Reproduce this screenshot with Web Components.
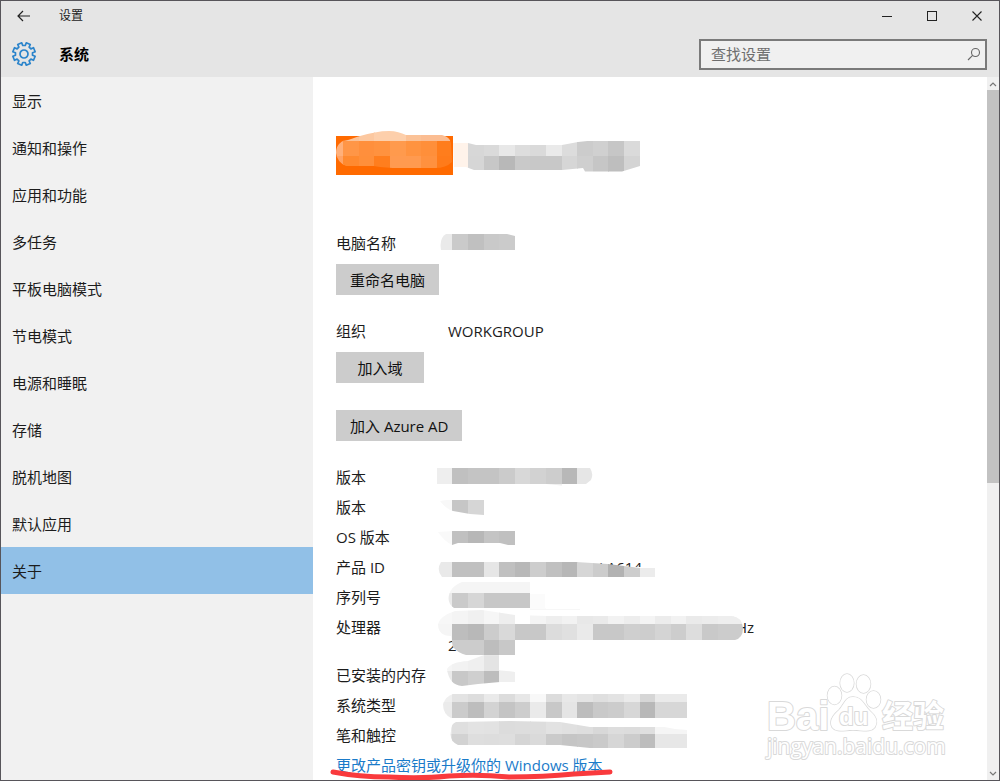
<!DOCTYPE html>
<html lang="zh-CN">
<head>
<meta charset="utf-8">
<title>设置</title>
<style>
  html, body { margin: 0; height: 100%; }
  body {
    font-family: "Open Sans", "Noto Sans CJK SC", sans-serif;
    font-size: 15px;
    line-height: 18px;
    color: #1c1c1c;
    background: #fff;
  }
</style>
</head>
<body>
<settings-app></settings-app>

<script>
const define = (name, html, setup) => {
  const template = document.createElement('template');
  template.innerHTML = html;
  customElements.define(name, class extends HTMLElement {
    connectedCallback() {
      if (this.shadowRoot) return;
      const root = this.attachShadow({ mode: 'open' });
      root.append(template.content.cloneNode(true));
      if (setup) setup(this, root);
    }
  });
};

/* Title bar: back arrow, window title, window controls */
define('title-bar', `
<style>
  :host { display: flex; align-items: center; height: 30px; font-size: 12px; }
  button { border: 0; padding: 0; background: none; color: #222; height: 30px; width: 45px; display: grid; place-items: center; }
  .title { flex: 1; padding-left: 13px; }
  svg { display: block; fill: none; stroke: currentColor; }
</style>
<button aria-label="返回"><svg width="14" height="12" viewBox="0 0 14 12" stroke-width="1.2"><path d="M13 6H1.2M6 1L1 6l5 5"/></svg></button>
<span class="title"><slot></slot></span>
<button aria-label="最小化"><svg width="10" height="10" shape-rendering="crispEdges"><path d="M0 5.5h10"/></svg></button>
<button aria-label="最大化"><svg width="10" height="10" shape-rendering="crispEdges"><path d="M.5 .5h9v9h-9z"/></svg></button>
<button aria-label="关闭"><svg width="10" height="10" stroke-width="1.1"><path d="M.5 .5l9 9M9.5 .5l-9 9"/></svg></button>
`);

define('gear-icon', `
<style>:host { display: block; } svg { display: block; }</style>
<svg width="26" height="26" viewBox="-13 -13 26 26" fill="none" stroke="#2b84cb" stroke-width="1.7" stroke-linejoin="round"><path/><circle r="4"/></svg>
`, (host, root) => {
  const pts = [];
  for (let i = 0; i < 8; i++) {
    const a = 22.5 + i * 45;
    for (const [d, r] of [[-14, 8.6], [-11, 11.4], [11, 11.4], [14, 8.6]]) {
      const t = (a + d) * Math.PI / 180;
      pts.push((r * Math.cos(t)).toFixed(2) + ' ' + (r * Math.sin(t)).toFixed(2));
    }
  }
  root.querySelector('path').setAttribute('d', 'M' + pts.join('L') + 'Z');
});

define('search-box', `
<style>
  :host { display: block; width: 288px; }
  label { display: flex; align-items: center; height: 31px; box-sizing: border-box; border: 2px solid #7a7a7a; background: #f0f0f0; padding: 0 4px 0 10px; }
  input { flex: 1; min-width: 0; border: 0; padding: 0; background: none; font: inherit; color: #222; outline: 0; }
  input::placeholder { color: #6e6e6e; opacity: 1; }
</style>
<label><input type="text" placeholder="查找设置" aria-label="查找设置">
<svg width="14" height="14" fill="none" stroke="#666" stroke-width="1.1"><circle cx="8.5" cy="5.5" r="4"/><path d="M5.6 8.4L1 13"/></svg></label>
`);

define('page-header', `
<style>
  :host { display: flex; align-items: center; height: 46px; padding: 0 12px 0 10px; }
  h1 { flex: 1; margin: 0 0 0 22px; font-size: 15px; line-height: 18px; color: #000; }
</style>
<gear-icon></gear-icon><h1><slot></slot></h1><search-box></search-box>
`);

define('nav-item', `
<style>
  :host { display: block; }
  a { display: flex; align-items: center; height: 47px; padding-left: 11px; color: inherit; text-decoration: none; }
  :host([selected]) a { background: #91c0e7; }
</style>
<a href="#"><slot></slot></a>
`, (host, root) => {
  if (host.hasAttribute('selected')) root.querySelector('a').setAttribute('aria-current', 'page');
});

define('action-button', `
<style>
  :host { display: block; }
  button { display: block; min-width: 88px; height: 31px; border: 0; padding: 0 14px; background: #ccc; color: #111; font: inherit; white-space: nowrap; }
</style>
<button><slot></slot></button>
`);

/* Blocks of a shared 15.6-unit mosaic grid, trimmed to a freehand outline */
const MASKS = {
  badge: { top: 136, left: 336, d: 'M336 153C336 147 339 143 343 141C350 140 356 137 360 136C370 133 380 131 389 131C396 131 401 133 406 135L442 135Q450 137 451 143L452 162Q446 168 435 168L400 168Q385 168 374 166L346 166Q337 162 336 153Z',
    rows: { '-22': [-7, 'fbbd92 fbc297 fcc8a0 fdcfab fdcfab fbc297 fbbd92 fbbd92'], '-21': [-7, 'ffb07a ff9647 ff8f3c ff923f ff9a4d ff9340 ff8f3a ff7d1c'], '-20': [-7, 'ffa366 ff8a30 ff8f3a ff7e1e ff9a50 ff9a50 ff913f ff7b1a'] } },
  title: { top: 136, left: 453, d: 'M453 143H468L476 145H562L578 142L592 140.5H640V166L622 171.5H585L583 168L562 170H474L466 167H454Z',
    rows: { '-21': [1, 'fff3ea d7 da e8 dd da ea dc cc d0 c6 da'], '-20': [1, 'fff3ea d6 c7 b8 c9 c8 c8 d6 cf c6 be d4'] } },
  name: { top: 234, d: 'M446 234H507L515 236V250H441Q439 238 446 234Z', rows: { '-15': [0, 'ea ca c0 c9 cb d8'] } },
  edition: { top: 468, d: 'M437 468H590Q594 474 591 480L586 484L566 486L546 484H437Z', rows: { 0: [0, 'ee c0 c4 c4 cb d8 d2 cd b8 e6'], 1: [5, 'eee eee eee'] } },
  version: { top: 498, d: 'M440 501L453 499H484V515L470 514L453 511Q446 509 440 501Z', rows: { 2: [0, 'f8 c6 d6'] } },
  os: { top: 528, d: 'M438 532L453 531H515V545H508L500 543H458L452 545Q444 541 438 532Z', rows: { 4: [0, 'f9 c0 b7 c4 c0'] } },
  product: { top: 558, d: 'M441 562H576L608 564L640 568L655 568V577H442Q436 570 441 562Z', rows: { 6: [0, 'e9 c0 c0 e6 c0 b8 cd c0 b7 d6 cc b2 cd ec'] } },
  serial: { top: 588, d: 'M462 582H530V594H545V608H454Q447 603 449 595Q451 586 462 582ZM530 608H580V610H530Z', rows: { 7: [0, 'f5 f5 f5 f5 f5 f5'], 8: [0, 'ea ca d6 c7 c7 c7 fb'], 9: [6, 'f7 f7 f7 f7'] } },
  cpu: { top: 618, d: 'M438 624Q440 616 455 611L482 610L515 615L548 616H732Q742 617 743 628Q743 638 735 640H515V655H466Q458 653 453 647L451 636Q438 636 438 624Z',
    rows: { 9: [0, 'f7 f4 f0 f6 ee ff f4 ee f2 e8 ea f2 ed f4 ec f2 ea ec ee ee ee'], 10: [0, 'f5 bd b8 cc d9 c8 c8 dc e0 ea c8 c8 cf cd d4 cd dd c9 cc cc'], 11: [0, 'ddd cc cc bd c8'] } },
  ram: { top: 666, d: 'M447 669Q451 662 468 661L484 655H499V670L515 672V682H500L478 684L462 686Q449 685 447 669Z', rows: { 11: [0, 'f5 f0 f0 e7'], 12: [0, 'f5 f2 ef e4 f4 f4'], 13: [0, 'ea c8 cf bd ef'], 14: [0, 'ea cc cc'] } },
  type: { top: 696, d: 'M453 694H687V718H451Q443 714 443 704Q446 696 453 694Z', rows: { 14: [0, 'ef e3 dd ea dc e7 f8 dc e8 e4 df e3 ea d6 ea ea'], 15: [0, 'eb cb bd d3 c4 cd ea c8 e5 bd c9 cc d7 b8 d7 d7'], 16: [0, 'eb'] } },
  pen: { top: 726, d: 'M456 722L510 721L560 722L590 727H664L675 729L687 730V748H590L560 745H458Q449 741 451 731Q451 724 456 722Z', rows: { 16: [0, 'e8 df e3 e2 dc dd dd e2 e0 de d8 dd dc df f5 f5'], 17: [0, 'dd d2 de dd de d5 da ca c5 c7 ca d6 cc bd e7 e7'] } }
};
const hex = c => '#' + (c.length === 2 ? c + c + c : c);

define('pixel-mask', `
<style>
  :host { display: block; position: absolute; inset: 0; pointer-events: none; }
  svg { display: block; overflow: visible; }
</style>
<svg width="24" height="18" aria-hidden="true"></svg>
`, (host, root) => {
  const m = MASKS[host.getAttribute('name')];
  const left = m.left || 448;
  let cells = '';
  for (const [n, [start, colors]] of Object.entries(m.rows)) {
    colors.split(' ').forEach((c, i) => {
      const x = 436.7 + 15.6 * (start + i), y = 468.3 + 15.6 * n;
      cells += `<rect x="${x.toFixed(1)}" y="${y.toFixed(1)}" width="16" height="16" fill="${hex(c)}" shape-rendering="crispEdges"/>`;
    });
  }
  const svg = root.querySelector('svg');
  svg.setAttribute('viewBox', `${left} ${m.top} 24 18`);
  svg.innerHTML = `<clipPath id="c"><path d="${m.d}"/></clipPath><g clip-path="url(#c)">${cells}</g>`;
});

define('account-banner', `
<style>
  :host { display: flex; height: 39px; }
  div { position: relative; width: 117px; }
  .tile { background: #ff6a00; }
</style>
<div class="tile"><pixel-mask name="badge"></pixel-mask></div>
<div><pixel-mask name="title"></pixel-mask></div>
`);

define('info-row', `
<style>
  :host { display: grid; grid-template-columns: 112px minmax(0, 1fr); }
  .value { position: relative; }
</style>
<span><slot name="label"></slot></span><span class="value"><slot></slot></span>
`, (host, root) => {
  const name = host.getAttribute('mask');
  if (name) {
    const mask = document.createElement('pixel-mask');
    mask.setAttribute('name', name);
    root.querySelector('.value').append(mask);
  }
});

define('marked-link', `
<style>
  :host { display: block; position: relative; width: max-content; }
  a { color: #1a7bc9; text-decoration: none; }
  svg { position: absolute; left: -7px; top: 11px; overflow: visible; pointer-events: none; }
</style>
<a href="#"><slot></slot></a>
<svg width="286" height="14" fill="none" stroke="#f93a3d" stroke-width="5" stroke-linecap="round" stroke-linejoin="round" aria-hidden="true"><path d="M4 5Q30 10 60 10Q92 12 120 9Q150 7 180 10Q215 10 245 7L281 5"/></svg>
`);

define('scroll-bar', `
<style>
  :host { display: flex; flex-direction: column; width: 12px; background: #f0f0f0; }
  button { display: grid; place-items: center; border: 0; padding: 0; height: 13px; background: none; }
  .track { flex: 1; }
  .thumb { height: 58%; background: #c2c2c2; }
  svg { fill: none; stroke: #777; stroke-width: 1.2; }
</style>
<button aria-label="向上滚动"><svg width="8" height="6"><path d="M1 5l3-3 3 3"/></svg></button>
<div class="track"><div class="thumb"></div></div>
<button aria-label="向下滚动"><svg width="8" height="6"><path d="M1 1l3 3 3-3"/></svg></button>
`);

define('site-watermark', `
<style>
  :host { display: block; position: absolute; right: 50px; bottom: 16px; pointer-events: none; }
  svg { display: block; overflow: visible; }
  text { font-family: "Liberation Sans", "Noto Sans CJK SC", sans-serif; font-weight: 700; }
  .url { font-family: "Open Sans", sans-serif; font-weight: 400; }
</style>
<svg width="184" height="94" viewBox="765 670 184 94" fill="#fff" stroke="#d9d9d9" stroke-width="2" stroke-linejoin="round" paint-order="stroke">
  <text x="767" y="730" font-size="40">Bai</text>
  <g stroke-width="1.5">
    <ellipse cx="834.5" cy="695.5" rx="7" ry="9"/>
    <ellipse cx="847" cy="683" rx="6.8" ry="9"/>
    <ellipse cx="863.5" cy="684" rx="7" ry="9"/>
    <ellipse cx="873.5" cy="699.5" rx="7" ry="8.5"/>
    <path d="M853 697C862 697 864 705 870 711C877 717 878 722 875 727C871 733 863 730 853 730C844 730 836 733 832 727C829 721 833 715 839 710C844 705 845 697 853 697Z"/>
  </g>
  <text x="839" y="725" font-size="24">du</text>
  <text x="882" y="727" font-size="31">经验</text>
  <text class="url" x="767" y="754" font-size="21">jingyan.baidu.com</text>
</svg>
`);

define('about-page', `
<style>
  :host { display: block; overflow-y: auto; scrollbar-width: none; padding: 59px 0 0 23px; }
  .group { display: grid; gap: 12px; margin-bottom: 27px; justify-items: start; }
  .group:last-child { margin-bottom: 0; }
  account-banner { margin-bottom: 59px; }
  info-row { justify-self: stretch; }
</style>
<account-banner></account-banner>
<div class="group">
  <info-row mask="name"><span slot="label">电脑名称</span></info-row>
  <action-button>重命名电脑</action-button>
</div>
<div class="group">
  <info-row><span slot="label">组织</span>WORKGROUP</info-row>
  <action-button>加入域</action-button>
</div>
<div class="group"><action-button>加入 Azure AD</action-button></div>
<div class="group">
  <info-row mask="edition"><span slot="label">版本</span></info-row>
  <info-row mask="version"><span slot="label">版本</span></info-row>
  <info-row mask="os"><span slot="label">OS 版本</span></info-row>
  <info-row mask="product"><span slot="label">产品 ID</span><product-tail></product-tail></info-row>
  <info-row mask="serial"><span slot="label">序列号</span></info-row>
  <info-row mask="cpu"><span slot="label">处理器</span><cpu-value></cpu-value></info-row>
  <info-row mask="ram"><span slot="label">已安装的内存</span></info-row>
  <info-row mask="type"><span slot="label">系统类型</span></info-row>
  <info-row mask="pen"><span slot="label">笔和触控</span></info-row>
  <marked-link>更改产品密钥或升级你的 Windows 版本</marked-link>
</div>
`);

/* Two-line processor value; only its ends show beside the mosaic */
define('cpu-value', `
<style>
  :host { display: grid; width: 306px; color: #222; }
  .end { text-align: right; }
</style>
<span class="end">Hz</span><span>2</span>
`);

/* End of the product number, with its lower part painted out */
define('product-tail', `
<style>
  :host { display: block; position: relative; width: 194px; text-align: right; color: #222; }
  i { position: absolute; right: 0; bottom: 0; width: 48px; height: 9px; background: #fff; }
</style>
LA614<i></i>
`);

define('settings-app', `
<style>
  :host { display: grid; grid-template-rows: auto minmax(0, 1fr); height: 100vh; box-sizing: border-box; border: 1px solid #57555a; background: #fff; position: relative; overflow: hidden; }
  header { background: #e5e5e5; }
  .body { display: grid; grid-template-columns: 312px minmax(0, 1fr) auto; min-height: 0; }
  nav { background: #f1f1f1; }
</style>
<header><title-bar>设置</title-bar><page-header>系统</page-header></header>
<div class="body">
  <nav>
    <nav-item>显示</nav-item><nav-item>通知和操作</nav-item><nav-item>应用和功能</nav-item>
    <nav-item>多任务</nav-item><nav-item>平板电脑模式</nav-item><nav-item>节电模式</nav-item>
    <nav-item>电源和睡眠</nav-item><nav-item>存储</nav-item><nav-item>脱机地图</nav-item>
    <nav-item>默认应用</nav-item><nav-item selected>关于</nav-item>
  </nav>
  <about-page></about-page>
  <scroll-bar></scroll-bar>
</div>
<site-watermark></site-watermark>
`);
</script>
</body>
</html>
